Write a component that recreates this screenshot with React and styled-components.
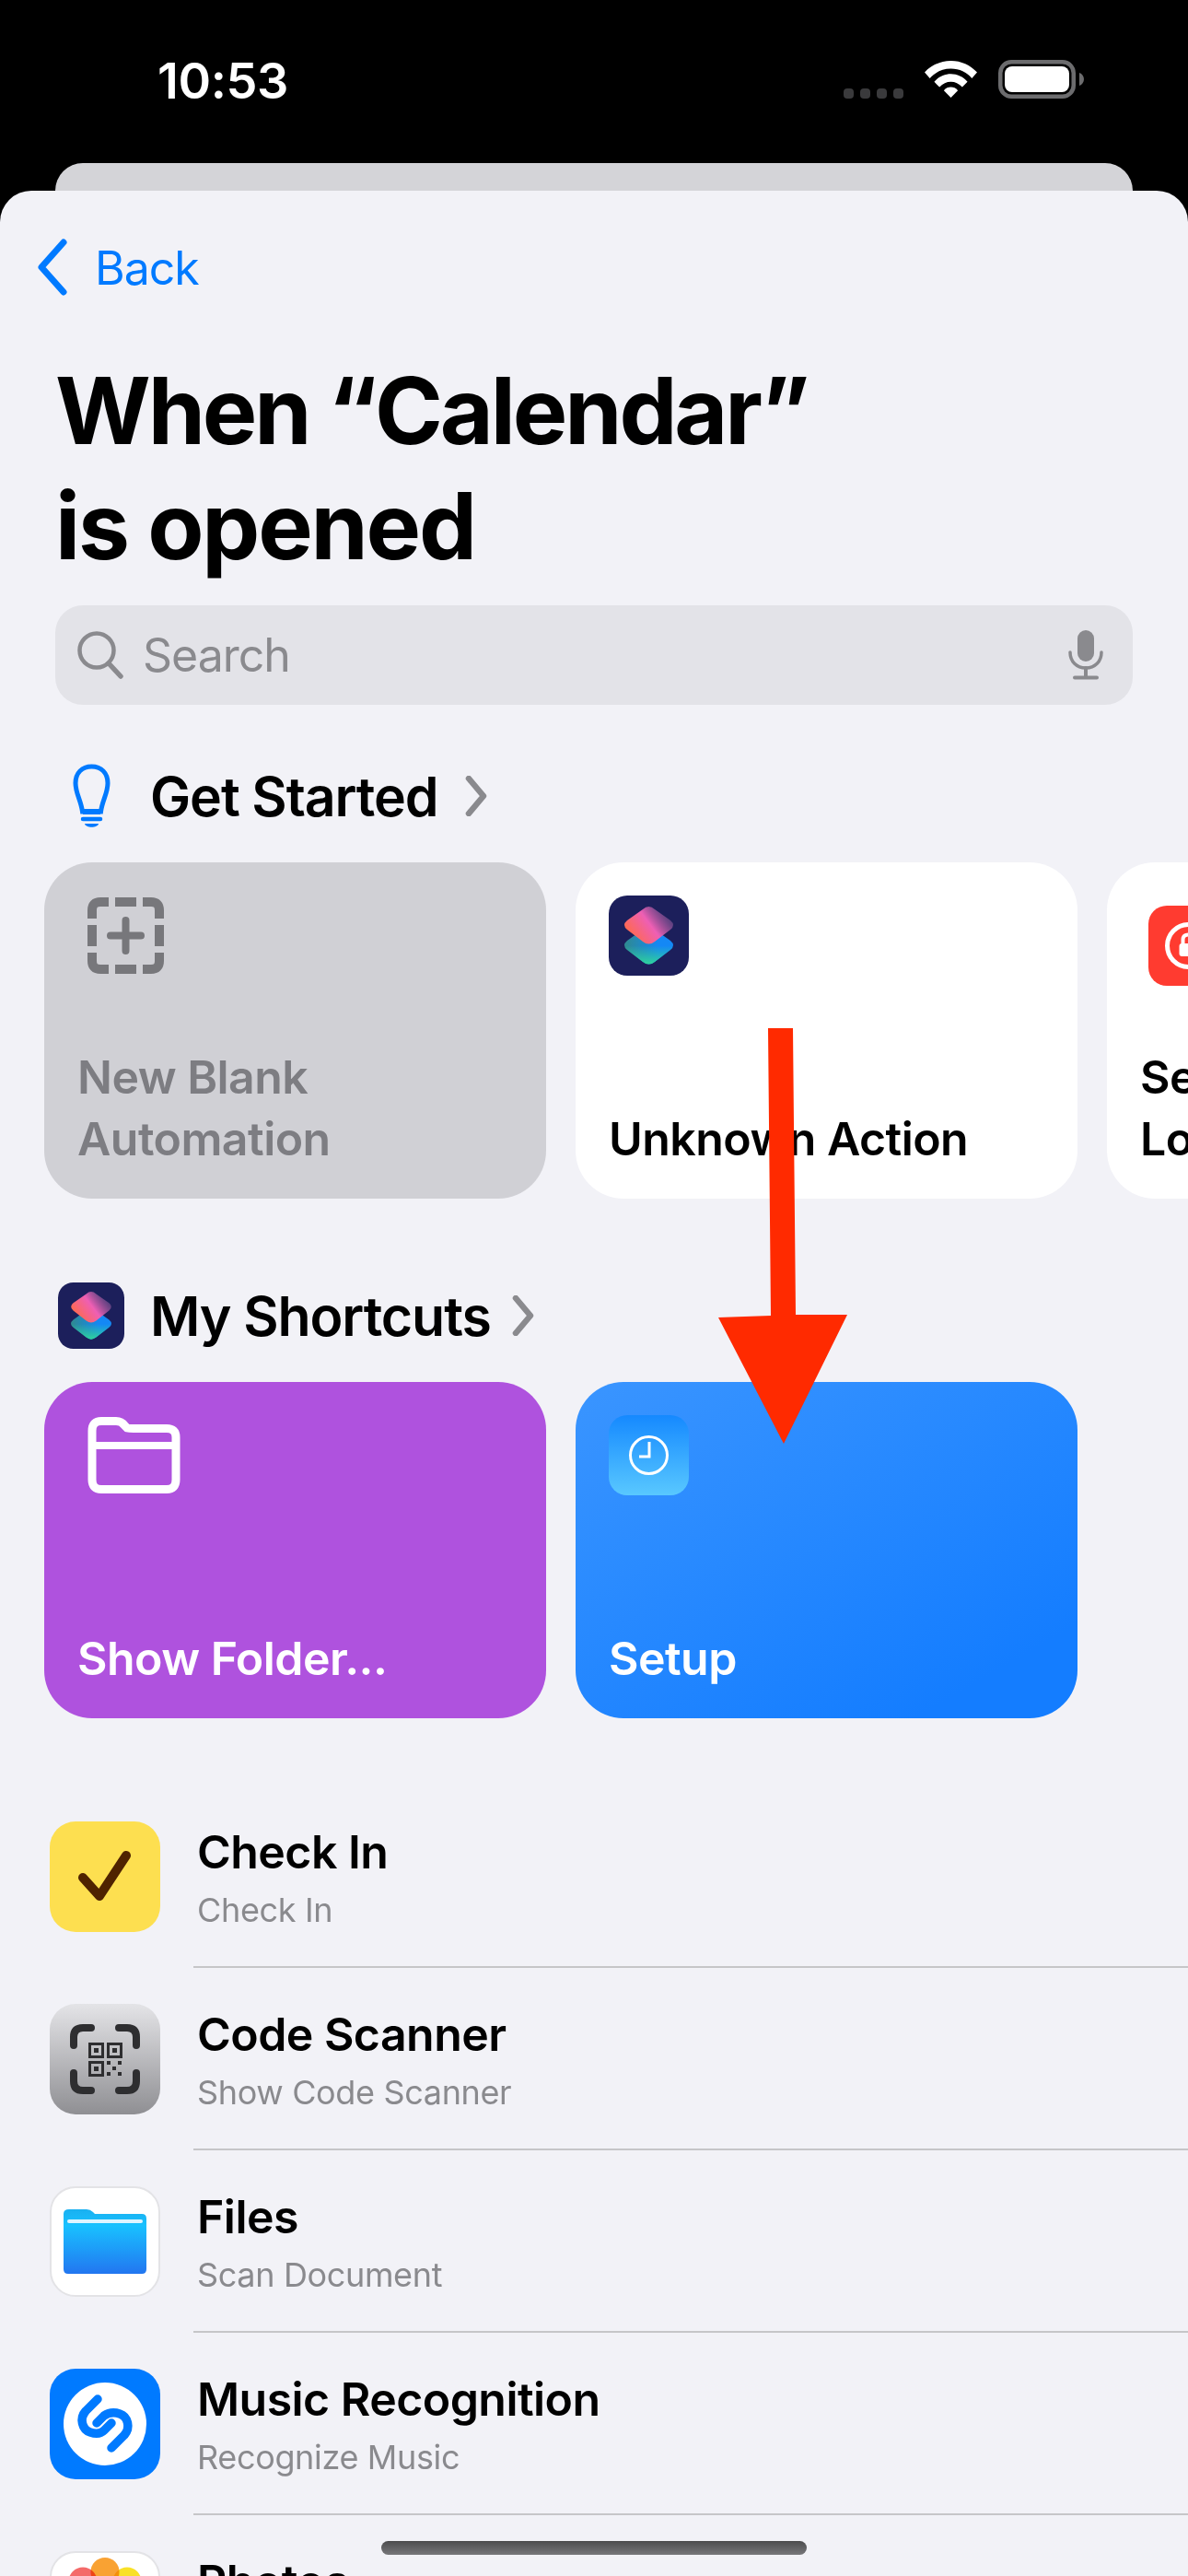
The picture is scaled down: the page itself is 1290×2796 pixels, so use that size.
import styled, { createGlobalStyle } from 'styled-components';

const GlobalStyle = createGlobalStyle`
  html, body {
    margin: 0;
    padding: 0;
    background: #000;
  }
`;

const Page = styled.div`
  position: relative;
  width: 1290px;
  height: 2796px;
  overflow: hidden;
  background: #000;
  font-family: 'Inter', 'Liberation Sans', sans-serif;
  color: #000;
`;

const StatusBar = styled.div`
  display: flex;
  align-items: flex-start;
  height: 177px;
  box-sizing: border-box;
  padding: 59px 113px 0 171px;
  color: #fff;
`;

const Clock = styled.div`
  font-size: 54px;
  line-height: 58px;
  font-weight: 600;
  letter-spacing: -0.4px;
`;

const StatusIcons = styled.div`
  margin-left: auto;
  display: flex;
  align-items: flex-start;
  gap: 23px;
  padding-top: 6px;
`;

const Dots = styled.div`
  display: flex;
  gap: 7px;
  padding-top: 31px;
`;

const Dot = styled.span`
  width: 11px;
  height: 11px;
  border-radius: 4px;
  background: #3a3a3c;
`;

const PeekCard = styled.div`
  height: 30px;
  margin: 0 60px;
  background: #d4d4d8;
  border-radius: 30px 30px 0 0;
`;

const Sheet = styled.div`
  background: #f2f2f7;
  border-radius: 34px 34px 0 0;
  height: 2589px;
  overflow: hidden;
`;

const NavBar = styled.div`
  display: flex;
  align-items: center;
  gap: 30px;
  height: 166px;
  box-sizing: border-box;
  padding: 0 0 0 40px;
`;

const BackLabel = styled.span`
  margin-top: 2px;
  font-size: 50px;
  color: #007aff;
  letter-spacing: -1px;
`;

const Title = styled.h1`
  margin: 10px 0 24px 60px;
  font-size: 100px;
  line-height: 125px;
  font-weight: 700;
`;

const TitleLine = styled.div`
  letter-spacing: ${props => props.$spacing}px;
`;

const SearchBar = styled.div`
  display: flex;
  align-items: center;
  gap: 21px;
  height: 108px;
  margin: 0 60px;
  padding: 0 32px 0 24px;
  box-sizing: border-box;
  background: #e3e3e8;
  border-radius: 30px;
`;

const SearchText = styled.span`
  flex: 1;
  font-size: 50px;
  letter-spacing: -1px;
  color: #8a8a8e;
`;

const SectionHeader = styled.div`
  display: flex;
  align-items: center;
  height: 72px;
  margin-top: ${props => props.$top}px;
  padding-left: ${props => props.$inset}px;
`;

const SectionTitle = styled.span`
  margin: 0 ${props => props.$after}px 0 ${props => props.$gap}px;
  font-size: 59px;
  font-weight: 600;
  letter-spacing: -1.1px;
`;

const CardRow = styled.div`
  display: flex;
  gap: 32px;
  margin: 36px 0 0 48px;
  width: 1400px;
`;

const Card = styled.div`
  flex: none;
  display: flex;
  flex-direction: column;
  justify-content: space-between;
  align-items: flex-start;
  box-sizing: border-box;
  width: 545px;
  height: 365px;
  padding: ${props => props.$iconTop}px 36px 31px;
  border-radius: 52px;
  background: ${props => props.$bg};
  color: ${props => props.$color};
`;

const CardGlyph = styled.div`
  display: flex;
  margin-left: ${props => props.$offset}px;
`;

const CardTitle = styled.div`
  font-size: 50px;
  line-height: 67px;
  font-weight: 600;
  letter-spacing: -0.55px;
`;

const AppTile = styled.div`
  flex: none;
  width: ${props => props.$size}px;
  height: ${props => props.$size}px;
  border-radius: ${props => props.$size * 0.23}px;
  background: ${props => props.$bg};
  display: flex;
  align-items: center;
  justify-content: center;
  overflow: hidden;
`;

const List = styled.div`
  margin-top: 73px;
`;

const Row = styled.div`
  display: flex;
  align-items: center;
  height: 198px;
  padding-left: 54px;
  gap: 36px;
`;

const RowIcon = styled.div`
  flex: none;
  width: 120px;
  height: 120px;
  border-radius: 28px;
  box-sizing: border-box;
  background: ${props => props.$bg};
  border: ${props => props.$outlined ? '2px solid #e3e3e6' : 'none'};
  display: flex;
  align-items: center;
  justify-content: center;
  overflow: hidden;
`;

const RowBody = styled.div`
  flex: 1;
  height: 100%;
  box-sizing: border-box;
  padding: 42px 0 0 4px;
  border-bottom: 2px solid #c6c6c8;
`;

const RowTitle = styled.div`
  font-size: 50px;
  line-height: 60px;
  font-weight: 570;
  letter-spacing: -0.55px;
`;

const RowSubtitle = styled.div`
  margin-top: 10px;
  font-size: 36px;
  line-height: 46px;
  letter-spacing: -0.35px;
  color: #8a8a8e;
`;

const Petal = styled.circle`
  mix-blend-mode: multiply;
`;

const ArrowOverlay = styled.svg`
  position: absolute;
  left: 770px;
  top: 1110px;
`;

const HomeIndicator = styled.div`
  position: absolute;
  left: 414px;
  top: 2758px;
  width: 462px;
  height: 15px;
  border-radius: 8px;
  background: linear-gradient(#4c4c4e, #77777a);
`;

const ShortcutsGlyph = ({ size }) => (
  <svg width={size} height={size} viewBox="0 0 87 87">
    <defs>
      <linearGradient id="scTop" x1="0.1" y1="0.75" x2="0.9" y2="0.3">
        <stop offset="0" stopColor="#ff6a4d" />
        <stop offset="0.55" stopColor="#ee5fb4" />
        <stop offset="1" stopColor="#7a4f90" stopOpacity="0.7" />
      </linearGradient>
      <linearGradient id="scBase" x1="0" y1="0.5" x2="1" y2="0.5">
        <stop offset="0" stopColor="#2f8a8f" />
        <stop offset="0.7" stopColor="#1488f5" />
      </linearGradient>
      <linearGradient id="scGreen" x1="0.5" y1="0.5" x2="0.5" y2="1">
        <stop offset="0" stopColor="#2fd39b" stopOpacity="0" />
        <stop offset="1" stopColor="#2fd39b" />
      </linearGradient>
    </defs>
    <path d="M37 37 L20 49 Q14 54 20 59 L37 72 Q43.500 77 50 72 L67 59 Q73 54 67 49 L50 37 Q43.500 32 37 37Z" fill="url(#scBase)" />
    <path d="M37 37 L20 49 Q14 54 20 59 L37 72 Q43.500 77 50 72 L67 59 Q73 54 67 49 L50 37 Q43.500 32 37 37Z" fill="url(#scGreen)" />
    <path d="M37 15 L20 27 Q14 32 20 37 L37 50 Q43.500 55 50 50 L67 37 Q73 32 67 27 L50 15 Q43.500 9 37 15Z" fill="url(#scTop)" />
  </svg>
);

const ChevronRight = () => (
  <svg width="26" height="44" viewBox="0 0 26 44">
    <path d="M5 3 L21 22 L5 41" fill="none" stroke="#8a8a8e" strokeWidth="6.500" strokeLinecap="round" strokeLinejoin="round" />
  </svg>
);

const App = () => (
  <Page>
    <GlobalStyle />
    <StatusBar>
      <Clock>10:53</Clock>
      <StatusIcons>
        <Dots>
          <Dot /><Dot /><Dot /><Dot />
        </Dots>
        <svg width="57" height="42" viewBox="0 0 60 42">
          <path d="M30 0 C18 0 8 5 0 13 L6 20 C12 13 20 9 30 9 C40 9 48 13 54 20 L60 13 C52 5 42 0 30 0Z" fill="#fff" />
          <path d="M30 15 C23 15 16 18 11 24 L17 30 C21 26 25 24 30 24 C35 24 39 26 43 30 L49 24 C44 18 37 15 30 15Z" fill="#fff" />
          <path d="M30 30 C27 30 24 31 22 34 L30 42 L38 34 C36 31 33 30 30 30Z" fill="#fff" />
        </svg>
        <svg width="93" height="42" viewBox="0 0 93 42">
          <rect x="2.250" y="2.250" width="79.500" height="37.500" rx="12" fill="none" stroke="#6c6c6e" strokeWidth="4.500" />
          <rect x="7" y="7" width="70" height="28" rx="8" fill="#fff" />
          <path d="M88 14 C91 15 93 18 93 21 C93 24 91 27 88 28Z" fill="#6c6c6e" />
        </svg>
      </StatusIcons>
    </StatusBar>
    <PeekCard />
    <Sheet>
      <NavBar>
        <svg width="33" height="62" viewBox="0 0 33 62">
          <path d="M29 4 L5 31 L29 58" fill="none" stroke="#007aff" strokeWidth="7" strokeLinecap="round" strokeLinejoin="round" />
        </svg>
        <BackLabel>Back</BackLabel>
      </NavBar>
      <Title>
        <TitleLine $spacing={-3.1}>When “Calendar”</TitleLine>
        <TitleLine $spacing={-2.2}>is opened</TitleLine>
      </Title>
      <SearchBar>
        <svg width="50" height="52" viewBox="0 0 50 52">
          <circle cx="21" cy="21" r="18.500" fill="none" stroke="#8a8a8e" strokeWidth="4.500" />
          <path d="M34 35 L47 49" stroke="#8a8a8e" strokeWidth="5.500" strokeLinecap="round" />
        </svg>
        <SearchText>Search</SearchText>
        <svg width="38" height="54" viewBox="0 0 38 54">
          <rect x="10" y="0" width="18" height="34" rx="9" fill="#8a8a8e" />
          <path d="M2 24 C2 34 9 41 19 41 C29 41 36 34 36 24" fill="none" stroke="#8a8a8e" strokeWidth="3.500" strokeLinecap="round" />
          <path d="M19 41 V51 M7 51.500 H31" stroke="#8a8a8e" strokeWidth="4" strokeLinecap="round" />
        </svg>
      </SearchBar>
      <SectionHeader $top={63} $inset={79}>
        <svg width="41" height="70" viewBox="0 0 41 70">
          <path d="M20.500 3 C10 3 3 10 3 21 C3 32 9 40 10.500 52 H30.500 C32 40 38 32 38 21 C38 10 31 3 20.500 3Z" fill="none" stroke="#007aff" strokeWidth="5" />
          <path d="M11 52 H30" stroke="#007aff" strokeWidth="6" />
          <path d="M11 60 H30" stroke="#007aff" strokeWidth="4.500" strokeLinecap="round" />
          <path d="M13 65 H28 C27 70 14 70 13 65Z" fill="#007aff" />
        </svg>
        <SectionTitle $gap={43} $after={28}>Get Started</SectionTitle>
        <ChevronRight />
      </SectionHeader>
      <CardRow>
        <Card $bg="#d0d0d5" $color="#7d7d82" $iconTop={38}>
          <CardGlyph $offset={11}>
            <svg width="83" height="83" viewBox="0 0 83 83">
              <path d="M5 23 V14 Q5 5 14 5 H23 M30 5 H53 M60 5 H69 Q78 5 78 14 V23 M78 30 V53 M78 60 V69 Q78 78 69 78 H60 M53 78 H30 M23 78 H14 Q5 78 5 69 V60 M5 53 V30" fill="none" stroke="#77777b" strokeWidth="10" />
              <path d="M41.500 25 V58 M25 41.500 H58" stroke="#77777b" strokeWidth="8" strokeLinecap="round" />
            </svg>
          </CardGlyph>
          <CardTitle>New Blank<br />Automation</CardTitle>
        </Card>
        <Card $bg="#fff" $color="#000" $iconTop={36}>
          <AppTile $size={87} $bg="#1c1f5b"><ShortcutsGlyph size={87} /></AppTile>
          <CardTitle>Unknown Action</CardTitle>
        </Card>
        <Card $bg="#fff" $color="#000" $iconTop={47}>
          <CardGlyph $offset={9}>
            <AppTile $size={87} $bg="#ff3b30">
              <svg width="87" height="87" viewBox="0 0 87 87">
                <circle cx="43.500" cy="43.500" r="23" fill="none" stroke="#fff" strokeWidth="5" />
                <rect x="33.500" y="41" width="20" height="14" rx="3" fill="#fff" />
                <path d="M37.500 42 V37 Q37.500 31.500 43.500 31.500 Q49.500 31.500 49.500 37 V42" fill="none" stroke="#fff" strokeWidth="4" />
              </svg>
            </AppTile>
          </CardGlyph>
          <CardTitle>Set Orientation<br />Lock</CardTitle>
        </Card>
      </CardRow>
      <SectionHeader $top={91} $inset={63}>
        <AppTile $size={72} $bg="#1c1f5b">
          <ShortcutsGlyph size={72} />
        </AppTile>
        <SectionTitle $gap={28} $after={22}>My Shortcuts</SectionTitle>
        <ChevronRight />
      </SectionHeader>
      <CardRow>
        <Card $bg="#af52de" $color="#fff" $iconTop={38}>
          <CardGlyph $offset={11}>
            <svg width="101" height="83" viewBox="0 0 101 83">
              <path d="M5 66 V15 Q5 4.500 15 4.500 H31 Q37 4.500 40 9 L43 12 Q45 12.500 50 12.500 H86 Q96 12.500 96 22 V68 Q96 78.500 86 78.500 H15 Q5 78.500 5 68Z" fill="none" stroke="#fff" strokeWidth="9" />
              <path d="M5 31 H96" stroke="#fff" strokeWidth="8" />
            </svg>
          </CardGlyph>
          <CardTitle>Show Folder...</CardTitle>
        </Card>
        <Card $bg="linear-gradient(150deg, #3a95ff, #147dff 85%)" $color="#fff" $iconTop={36}>
          <AppTile $size={87} $bg="linear-gradient(#1589ff, #59c8ff)">
            <svg width="87" height="87" viewBox="0 0 87 87">
              <circle cx="43.500" cy="43.500" r="20" fill="none" stroke="#fff" strokeWidth="3" />
              <path d="M44 29 V45 H33" fill="none" stroke="#fff" strokeWidth="3" />
            </svg>
          </AppTile>
          <CardTitle>Setup</CardTitle>
        </Card>
      </CardRow>
      <List>
        <Row>
          <RowIcon $bg="#fddf50">
            <svg width="120" height="120" viewBox="0 0 120 120">
              <path d="M36 61 L54 81 L83 37" fill="none" stroke="#4f2300" strokeWidth="10" strokeLinecap="round" strokeLinejoin="round" />
            </svg>
          </RowIcon>
          <RowBody>
            <RowTitle>Check In</RowTitle>
            <RowSubtitle>Check In</RowSubtitle>
          </RowBody>
        </Row>
        <Row>
          <RowIcon $bg="linear-gradient(#e4e4e7, #8f8f93)">
            <svg width="120" height="120" viewBox="0 0 120 120" fill="#2e2e30">
              <path d="M45 26 H36 Q26 26 26 36 V45 M75 26 H84 Q94 26 94 36 V45 M45 94 H36 Q26 94 26 84 V75 M75 94 H84 Q94 94 94 84 V75" fill="none" stroke="#2e2e30" strokeWidth="8" strokeLinecap="round" />
              <path fillRule="evenodd" d="M42 42 H59 V59 H42Z M45 45 V56 H56 V45Z M48 48 H53 V53 H48Z M62 42 H79 V59 H62Z M65 45 V56 H76 V45Z M68 48 H73 V53 H68Z M42 62 H59 V79 H42Z M45 65 V76 H56 V65Z M48 68 H53 V73 H48Z" />
              <path d="M62 62 H66 V66 H62Z M74 62 H78 V66 H74Z M68 68 H72 V72 H68Z M62 74 H66 V78 H62Z M74 74 H78 V78 H74Z" />
            </svg>
          </RowIcon>
          <RowBody>
            <RowTitle>Code Scanner</RowTitle>
            <RowSubtitle>Show Code Scanner</RowSubtitle>
          </RowBody>
        </Row>
        <Row>
          <RowIcon $bg="#fff" $outlined>
            <svg width="116" height="116" viewBox="2 2 116 116">
              <defs>
                <linearGradient id="filesFill" x1="0" y1="0" x2="0" y2="1">
                  <stop offset="0" stopColor="#1ab0f0" />
                  <stop offset="0.25" stopColor="#19c1ff" />
                  <stop offset="1" stopColor="#2276f0" />
                </linearGradient>
              </defs>
              <path d="M15 30 Q15 25 21 25 H40 Q44 25 47 28 L49 30 H100 Q105 30 105 35 V90 Q105 95 100 95 H20 Q15 95 15 90Z" fill="url(#filesFill)" />
              <rect x="19" y="36" width="82" height="4" rx="2" fill="#dff4ff" />
            </svg>
          </RowIcon>
          <RowBody>
            <RowTitle>Files</RowTitle>
            <RowSubtitle>Scan Document</RowSubtitle>
          </RowBody>
        </Row>
        <Row>
          <RowIcon $bg="#007aff">
            <svg width="120" height="120" viewBox="0 0 120 120">
              <circle cx="60" cy="60" r="45" fill="#fff" />
              <path d="M52 33 L39 46 C32 54 35 66 44 69 C50 71 55 71 59 67 L67 59" fill="none" stroke="#007aff" strokeWidth="9.500" strokeLinecap="round" strokeLinejoin="round" />
              <path d="M67 86 L81 72 C88 64 85 52 76 49 C70 47 65 47 59 51 L51 59" fill="none" stroke="#007aff" strokeWidth="9.500" strokeLinecap="round" strokeLinejoin="round" />
            </svg>
          </RowIcon>
          <RowBody>
            <RowTitle>Music Recognition</RowTitle>
            <RowSubtitle>Recognize Music</RowSubtitle>
          </RowBody>
        </Row>
        <Row>
          <RowIcon $bg="#fff" $outlined>
            <svg width="116" height="116" viewBox="2 2 116 116">
              <Petal cx="36" cy="33" r="15.500" fill="#f46a6a" />
              <Petal cx="84" cy="33" r="15.500" fill="#f9e128" />
              <Petal cx="60" cy="22.500" r="15.500" fill="#f9a233" />
            </svg>
          </RowIcon>
          <RowBody>
            <RowTitle>Photos</RowTitle>
          </RowBody>
        </Row>
      </List>
    </Sheet>
    <ArrowOverlay width="160" height="470" viewBox="0 0 160 470">
      <path d="M64 6 H91 L94 317 L150 317 L81 457 L10 320 L67 318Z" fill="#ff2a00" />
    </ArrowOverlay>
    <HomeIndicator />
  </Page>
);

export default App;
